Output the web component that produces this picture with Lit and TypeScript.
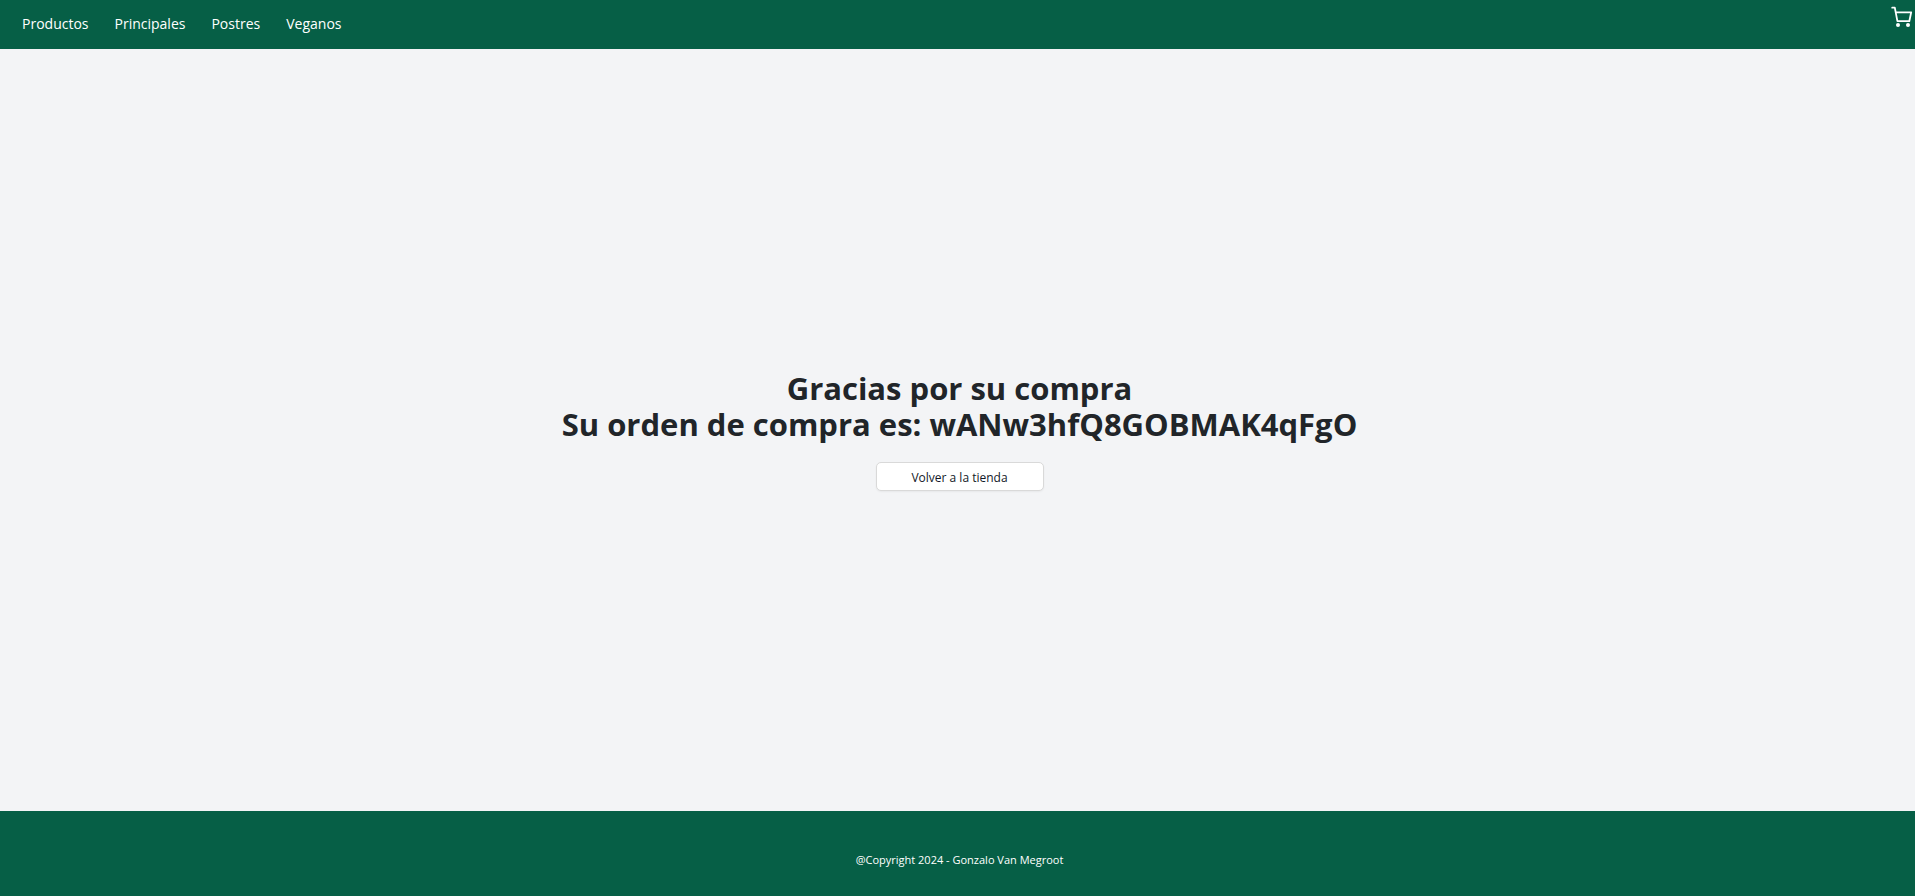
import { LitElement, html, css } from "lit";
import { customElement } from "lit/decorators.js";

@customElement("app-root")
export class AppRoot extends LitElement {
  static styles = css`
    :host {
      display: flex;
      flex-direction: column;
      min-height: 100vh;
      background: #f3f4f6;
      color: #212529;
      font-family: "Segoe UI", "Open Sans", "Noto Sans", sans-serif;
    }
    .bar {
      display: flex;
      justify-content: space-between;
      align-items: flex-start;
      background: #065f46;
      color: #fff;
    }
    .links {
      display: flex;
      gap: 26px;
      margin: 0;
      padding: 14px 22px 15px;
      list-style: none;
      font-size: 14px;
      line-height: 20px;
      font-weight: 500;
    }
    a {
      color: inherit;
      text-decoration: none;
    }
    .cart {
      display: block;
      padding: 5px 2px;
    }
    .cart svg {
      display: block;
    }
    .content {
      flex: 1;
      display: flex;
      flex-direction: column;
      align-items: center;
      justify-content: center;
      gap: 20px;
      padding: 1px 0 0 4px;
    }
    h1 {
      margin: 0;
      text-align: center;
      font-size: 31px;
      line-height: 36px;
      font-weight: 700;
    }
    .back {
      box-sizing: border-box;
      width: 168px;
      padding: 5px 0 2px;
      border: 1px solid #d9d9d9;
      border-radius: 5px;
      background: #fff;
      box-shadow: 0 1px 2px rgba(0, 0, 0, 0.05);
      color: #111827;
      font: 400 12px/20px "Segoe UI", "Open Sans", "Noto Sans", sans-serif;
    }
    footer {
      padding: 41px 0 28px 4px;
      background: #065f46;
      color: #fff;
      text-align: center;
      font-size: 11px;
      line-height: 16px;
    }
  `;

  private links = ["Productos", "Principales", "Postres", "Veganos"];

  render() {
    return html`
      <nav class="bar">
        <ul class="links">
          ${this.links.map((name) => html`<li><a href="#">${name}</a></li>`)}
        </ul>
        <a class="cart" href="#" aria-label="Carrito">
          <svg width="24" height="24" viewBox="0 0 24 24" fill="none" stroke="#fff"
            stroke-width="1.8" stroke-linecap="round" stroke-linejoin="round">
            <path d="M3.2 2.7h2.6l2.6 13.5h11.9l1.9-8.9H6.8"/>
            <circle cx="9" cy="20" r="2" fill="#fff" stroke="none"/>
            <circle cx="19" cy="20" r="2" fill="#fff" stroke="none"/>
          </svg>
        </a>
      </nav>
      <main class="content">
        <h1>Gracias por su compra<br />Su orden de compra es: wANw3hfQ8GOBMAK4qFgO</h1>
        <button class="back" type="button">Volver a la tienda</button>
      </main>
      <footer>@Copyright 2024 - Gonzalo Van Megroot</footer>
    `;
  }
}
